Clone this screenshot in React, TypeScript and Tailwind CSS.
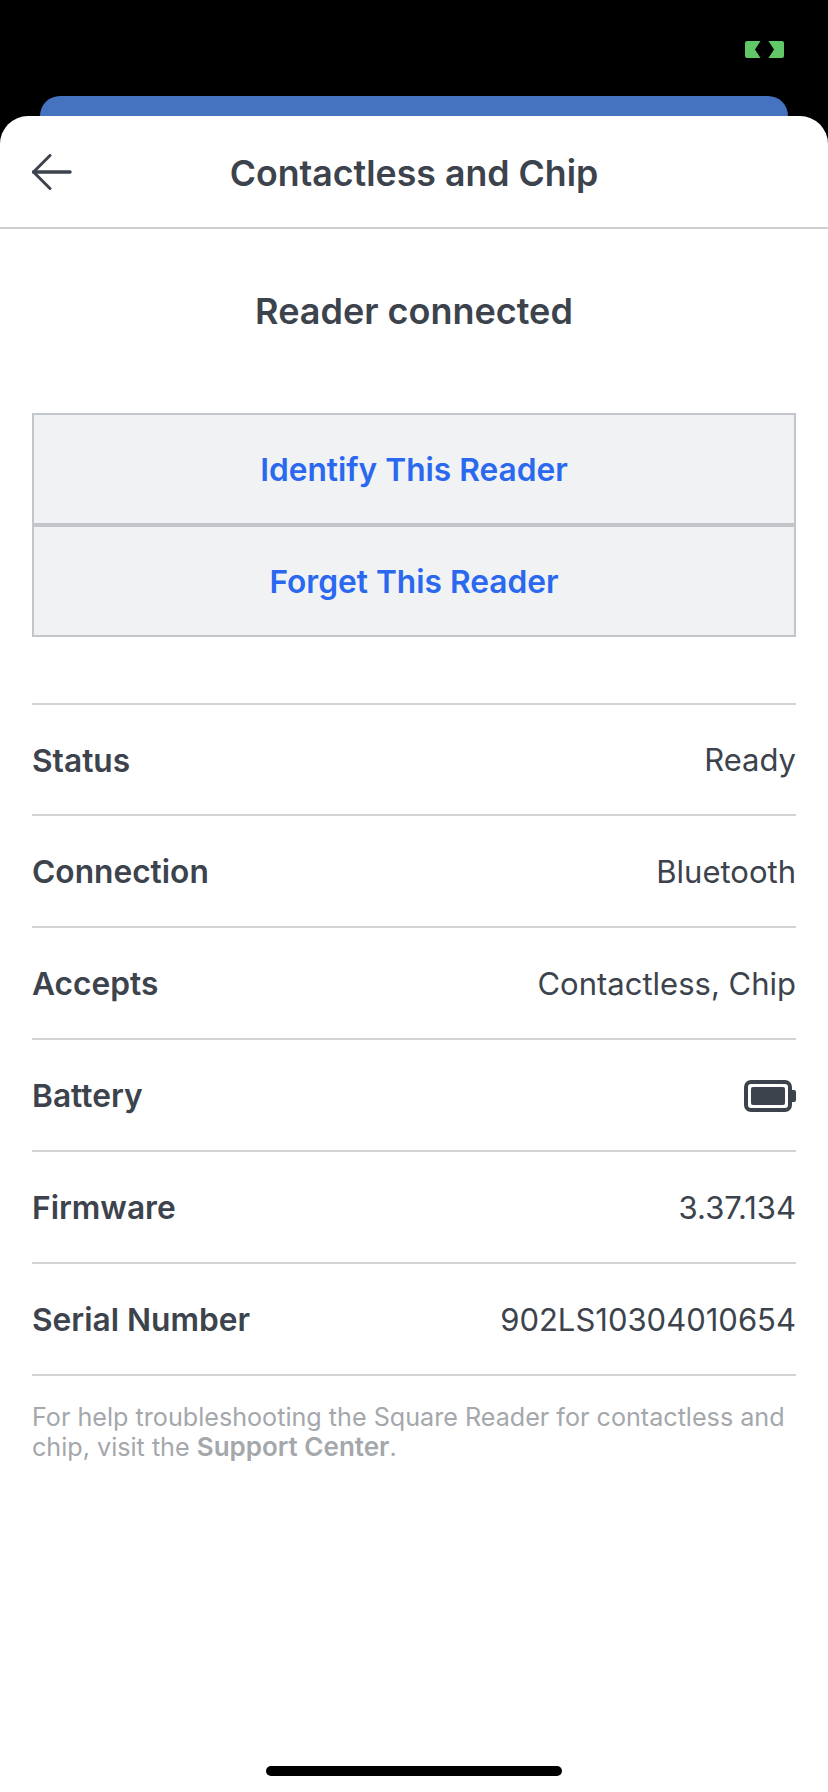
const rows = [
  { label: 'Status', value: 'Ready' },
  { label: 'Connection', value: 'Bluetooth' },
  { label: 'Accepts', value: 'Contactless, Chip' },
  { label: 'Battery', value: null },
  { label: 'Firmware', value: '3.37.134' },
  { label: 'Serial Number', value: '902LS10304010654' },
];

function BatteryIcon() {
  return (
    <svg width="52" height="32" viewBox="0 0 52 32" fill="none">
      <rect x="2" y="2" width="44" height="28" rx="5" stroke="#3c434c" strokeWidth="4" />
      <rect x="7" y="7" width="34" height="18" rx="2" fill="#3c434c" />
      <path d="M48 10h2a2 2 0 0 1 2 2v8a2 2 0 0 1-2 2h-2z" fill="#3c434c" />
    </svg>
  );
}

export default function App() {
  return (
    <div className="flex min-h-[1792px] flex-col bg-black font-['Inter',sans-serif] text-[#3c434c]">
      <div className="flex h-[96px] justify-end pr-[44px] pt-[41px]">
        <svg width="39" height="17" viewBox="0 0 39 17">
          <path d="M2 0h13.500L10 8.500 15.500 17H2a2 2 0 0 1-2-2V2a2 2 0 0 1 2-2z" fill="#62c766" />
          <path d="M37 0H23.500L29 8.500 23.500 17H37a2 2 0 0 0 2-2V2a2 2 0 0 0-2-2z" fill="#62c766" />
        </svg>
      </div>
      <div className="mx-[40px] h-[20px] rounded-t-[24px] bg-[#4673bf]" />
      <div className="flex flex-1 flex-col rounded-t-[28px] bg-white">
        <div className="relative flex h-[113px] items-center justify-center border-b-2 border-[#cdcfd1] pt-[4px]">
          <svg className="absolute left-[32px] top-[38px]" width="40" height="36" viewBox="0 0 40 36" fill="none" stroke="#3c434c" strokeLinecap="round" strokeLinejoin="round">
            <path d="M1.500 18H38" strokeWidth="3.500" />
            <path d="M18 1.500L1.500 18L18 34.500" strokeWidth="3" />
          </svg>
          <h1 className="text-[35.700px] font-semibold">Contactless and Chip</h1>
        </div>
        <h2 className="mt-[60px] text-center text-[36px] leading-[44px] font-semibold">Reader connected</h2>
        <div className="mx-[32px] mt-[80px] flex flex-col border-2 border-[#c2c5c9] bg-[#f1f2f4] text-[31.700px] font-semibold text-[#2b68f0]">
          <div className="flex h-[112px] items-center justify-center border-b-4 border-[#c2c5c9] pt-[2px]">Identify This Reader</div>
          <div className="flex h-[108px] items-center justify-center pt-[2px]">Forget This Reader</div>
        </div>
        <div className="mx-[32px] mt-[66px] border-t-2 border-[#d2d3d5]">
          {rows.map((row) => (
            <div key={row.label} className="flex h-[112px] items-center justify-between border-b-2 border-[#d2d3d5] pt-[2px] first:h-[111px]">
              <span className="text-[31.700px] font-semibold">{row.label}</span>
              {row.value ? <span className="text-[31px] font-normal">{row.value}</span> : <BatteryIcon />}
            </div>
          ))}
        </div>
        <p className="mx-[32px] mt-[26px] text-[25.150px] leading-[30px] text-[#a4a7ab]">
          For help troubleshooting the Square Reader for contactless and chip, visit the <b className="text-[26px] font-semibold">Support Center</b>.
        </p>
        <div className="mx-auto mt-auto mb-[16px] h-[10px] w-[296px] rounded-full bg-black" />
      </div>
    </div>
  );
}
